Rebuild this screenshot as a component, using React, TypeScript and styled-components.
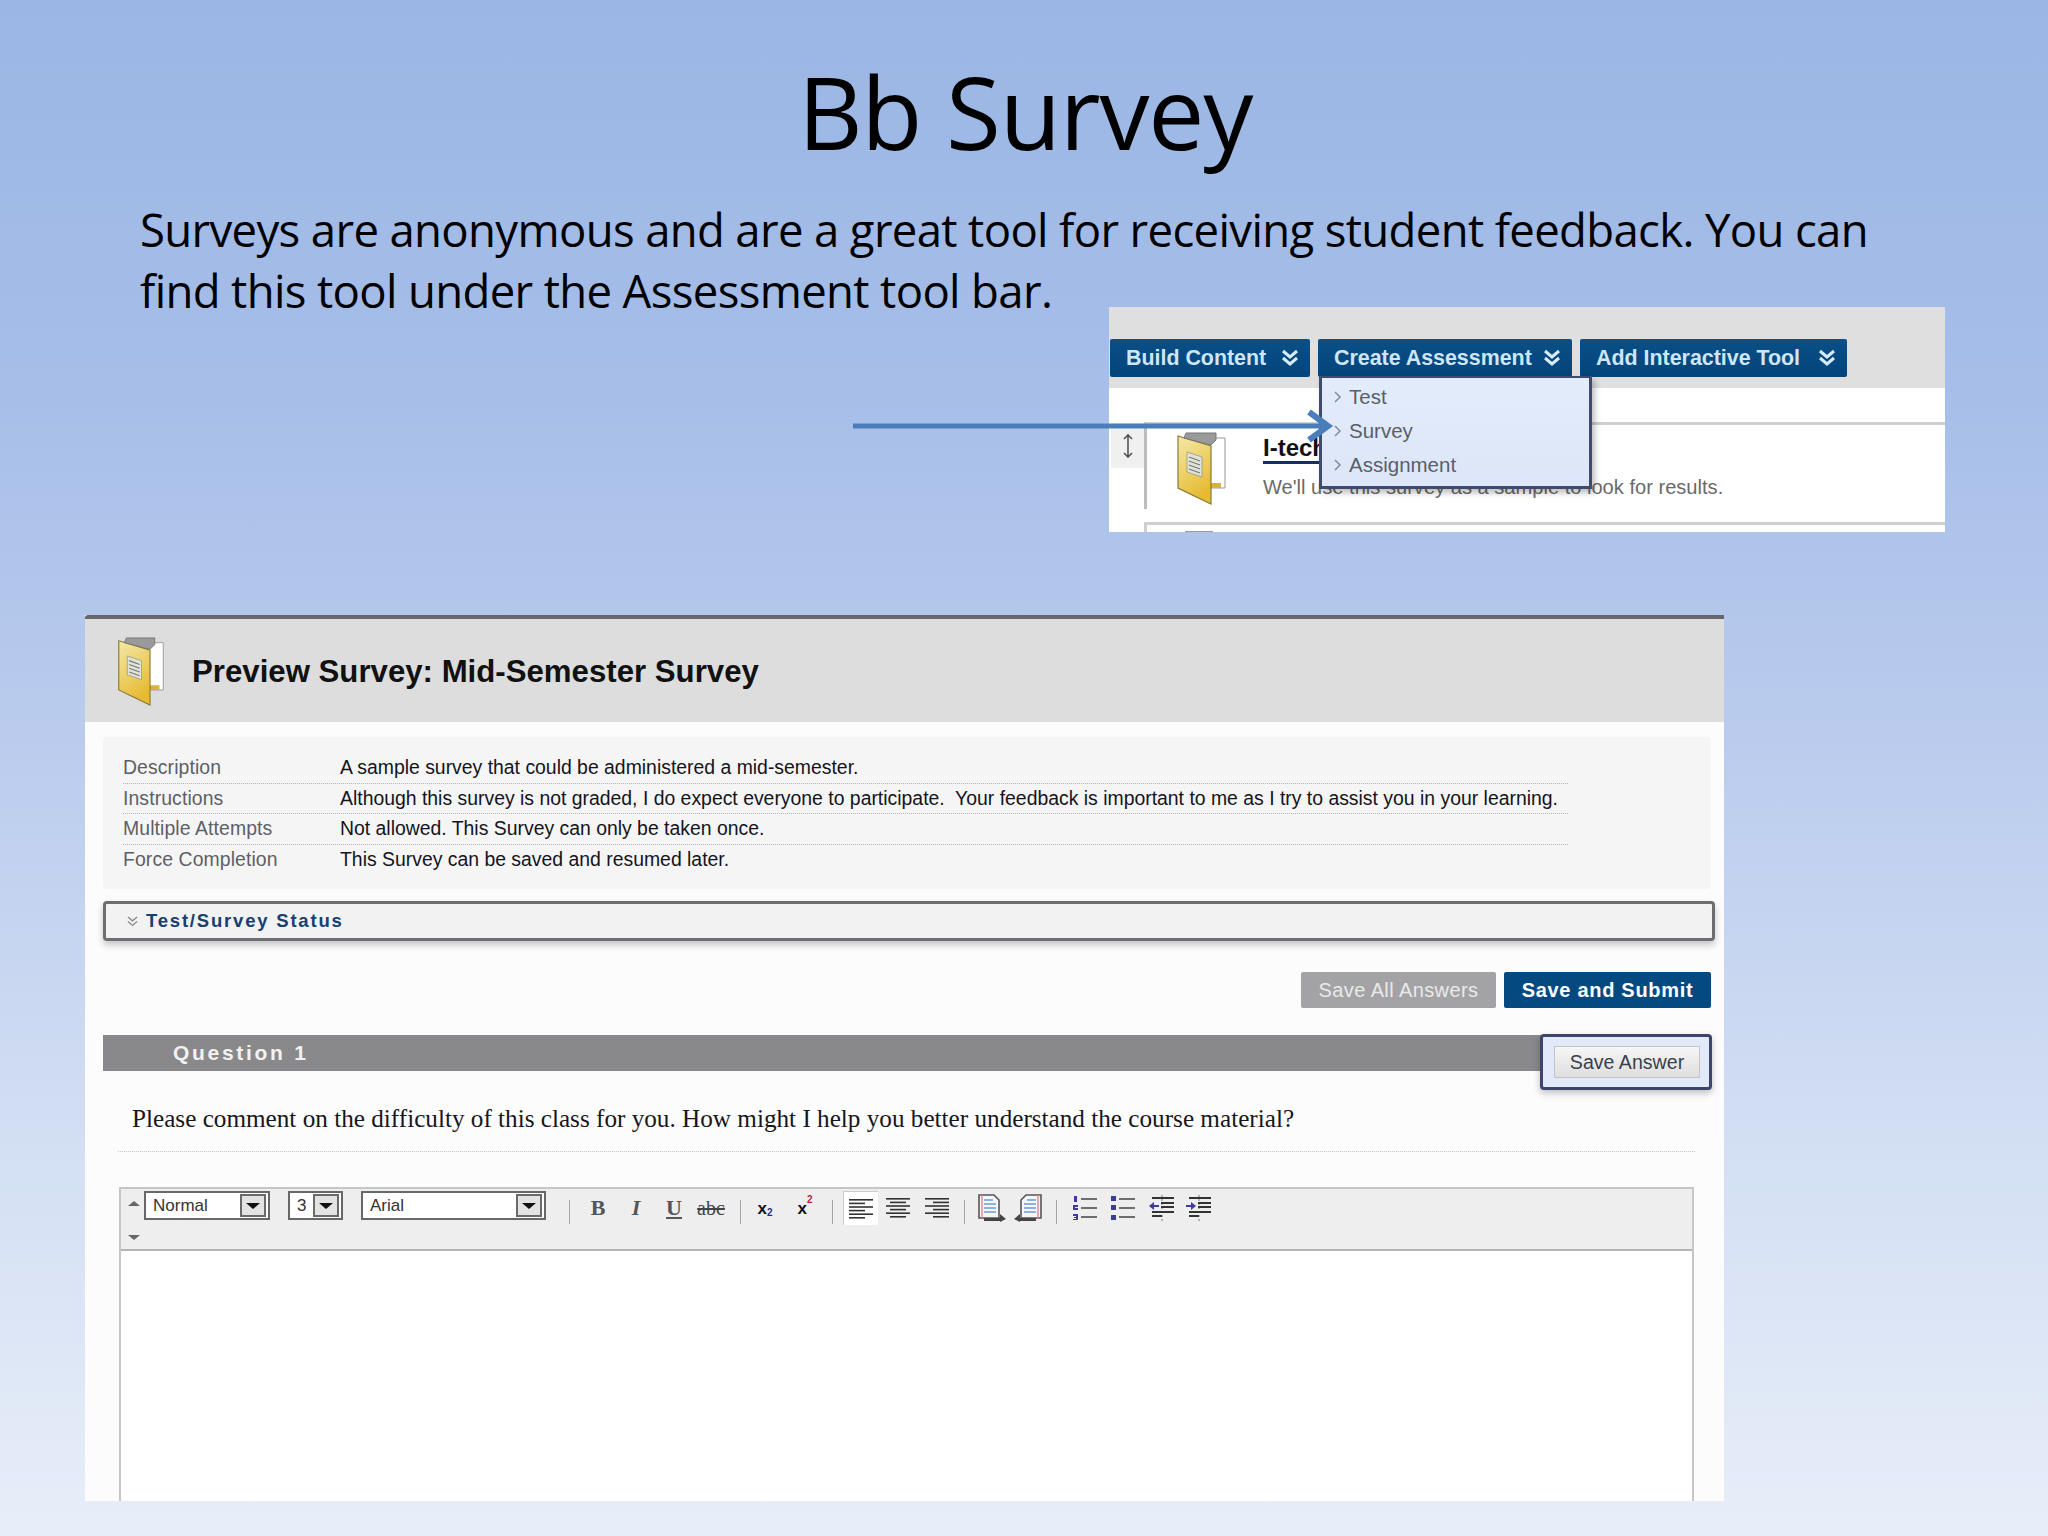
import React from "react";
import styled, { createGlobalStyle } from "styled-components";

const Global = createGlobalStyle`
  html, body { margin: 0; padding: 0; background: #e6ecf8; }
  body { font-family: "Liberation Sans", Arial, sans-serif; }
`;

const Slide = styled.div`
  position: relative;
  width: 2048px;
  height: 1536px;
  overflow: hidden;
  display: flex;
  flex-direction: column;
  background: linear-gradient(180deg, #9bb6e5 0%, #a6bee8 25%, #bccdee 50%, #d3dff3 75%, #e8eef9 100%);
`;

const Title = styled.h1`
  height: 199px;
  box-sizing: border-box;
  margin: 0;
  display: flex;
  align-items: center;
  justify-content: center;
  padding: 22px 0 0 2px;
  font: 400 100px/1 "Open Sans", Lato, sans-serif;
  letter-spacing: -1.2px;
  color: #000;
`;

const Lead = styled.p`
  margin: 0 0 0 140px;
  width: 1770px;
  font: 400 45.5px/61px "Open Sans", Lato, sans-serif;
  letter-spacing: -0.65px;
  font-variant-ligatures: none;
  color: #000;
`;

/* top screenshot */
const MenuShot = styled.div`
  margin: -14px 0 0 1109px;
  width: 836px;
  height: 225px;
  position: relative;
  overflow: hidden;
  background: #fff;
  flex: none;
`;

const MenuBand = styled.div`
  height: 81px;
  background: #dfdfdf;
  display: flex;
  align-items: flex-start;
  gap: 8px;
  padding: 32px 0 0 1px;
  box-sizing: border-box;
`;

const MenuButton = styled.div<{ $w: number }>`
  width: ${(p) => p.$w}px;
  height: 38px;
  box-sizing: border-box;
  padding: 0 10px 0 16px;
  display: flex;
  align-items: center;
  justify-content: space-between;
  background: linear-gradient(180deg, #0a4f88, #03447a);
  border-radius: 2px;
  color: #cfe6f6;
  font-weight: 700;
  font-size: 21.4px;
  white-space: nowrap;
`;

const ContentRow = styled.div`
  display: flex;
  height: 100px;
  margin-top: 34px;
`;

const Handle = styled.div`
  width: 33px;
  height: 45px;
  margin: 1px 0 0 2px;
  background: #f0f0f0;
  display: flex;
  align-items: center;
  justify-content: center;
  flex: none;
`;

const ItemCard = styled.div`
  flex: 1;
  height: 77px;
  border-top: 3px solid #cfcfcf;
  border-left: 3px solid #bdbdbd;
  display: flex;
  gap: 36px;
  padding: 7px 0 0 30px;
`;

const ItemTitle = styled.div`
  font-size: 24px;
  font-weight: 700;
  color: #111;
  border-bottom: 3px solid #12325c;
  width: 100px;
  line-height: 27px;
  margin-top: 2px;
  white-space: nowrap;
`;

const ItemText = styled.div`
  margin-top: 12px;
  font-size: 20.1px;
  color: #6a6a6a;
  white-space: nowrap;
`;

const NextCard = styled.div`
  margin: 0 0 0 35px;
  height: 12px;
  box-sizing: border-box;
  padding: 6px 0 0 38px;
  border-top: 3px solid #cfcfcf;
  border-left: 3px solid #cfcfcf;
`;

const NextIconTip = styled.div`
  width: 28px;
  height: 3px;
  background: #9a9a9a;
`;

const Dropdown = styled.div`
  position: absolute;
  left: 210px;
  top: 69px;
  width: 273px;
  height: 113px;
  box-sizing: border-box;
  padding: 2px 0 0 12px;
  background: linear-gradient(180deg, #e2ecfb, #dce6f8);
  border: 3px solid #3f4b6e;
  border-top-width: 2px;
  box-shadow: 3px 4px 6px rgba(0, 0, 0, 0.25);
  display: flex;
  flex-direction: column;
`;

const DropItem = styled.div`
  height: 34px;
  display: flex;
  align-items: center;
  gap: 7px;
  font-size: 20.5px;
  color: #5a5f68;
`;

/* lower screenshot */
const SurveyShot = styled.div`
  position: relative;
  margin: 83px 0 0 85px;
  width: 1639px;
  height: 886px;
  flex: none;
  overflow: hidden;
  background: #fcfcfd;
`;

const Header = styled.div`
  height: 107px;
  box-sizing: border-box;
  border-top: 4px solid #66676c;
  border-top-left-radius: 3px;
  background: #dcdddc;
  display: flex;
  align-items: center;
  padding: 2px 0 0 32px;
  gap: 26px;
`;

const HeaderTitle = styled.h2`
  margin: 0;
  font-size: 31.2px;
  font-weight: 700;
  color: #111;
  white-space: nowrap;
`;

const InfoBox = styled.div`
  margin: 15px 13px 0 18px;
  height: 152px;
  box-sizing: border-box;
  padding: 16px 0 0 20px;
  border-radius: 4px;
  background: #f5f5f6;
`;

const InfoRow = styled.div<{ $last?: boolean }>`
  width: 1445px;
  height: 30.5px;
  display: flex;
  align-items: center;
  box-sizing: border-box;
  font-size: 19.4px;
  border-bottom: ${(p) => (p.$last ? "none" : "1px dotted #b4b4b4")};
`;

const InfoLabel = styled.div`
  width: 217px;
  color: #5d5f66;
  letter-spacing: 0.1px;
  flex: none;
`;

const InfoValue = styled.div`
  color: #14141c;
  white-space: pre;
`;

const StatusBar = styled.div`
  margin: 12px 9px 0 18px;
  height: 40px;
  box-sizing: border-box;
  border: 3px solid #6e6e72;
  border-radius: 4px;
  background: #f2f2f3;
  box-shadow: 0 4px 7px rgba(0, 0, 0, 0.22);
  display: flex;
  align-items: center;
  gap: 7px;
  padding-left: 20px;
  font-size: 18.5px;
  font-weight: 700;
  letter-spacing: 1.8px;
  color: #16406f;
`;

const ActionRow = styled.div`
  margin: 31px 13px 0 0;
  display: flex;
  justify-content: flex-end;
  gap: 8px;
`;

const ActionButton = styled.div<{ $primary?: boolean }>`
  height: 36px;
  width: ${(p) => (p.$primary ? 207 : 195)}px;
  display: flex;
  align-items: center;
  justify-content: center;
  border-radius: 2px;
  font-size: 20px;
  white-space: nowrap;
  background: ${(p) => (p.$primary ? "#04497f" : "#a3a3a5")};
  color: ${(p) => (p.$primary ? "#fff" : "#e9e9ea")};
  font-weight: ${(p) => (p.$primary ? 700 : 400)};
  letter-spacing: ${(p) => (p.$primary ? "0.7px" : "0.4px")};
`;

const QuestionBar = styled.div`
  margin: 27px 13px 0 18px;
  height: 36px;
  box-sizing: border-box;
  padding-left: 70px;
  background: #89898c;
  display: flex;
  align-items: center;
  font-size: 21px;
  font-weight: 700;
  letter-spacing: 2.7px;
  color: #f2f2f2;
`;

const SaveBox = styled.div`
  position: absolute;
  left: 1455px;
  top: 419px;
  width: 172px;
  height: 56px;
  box-sizing: border-box;
  border: 3px solid #3d456c;
  border-radius: 4px;
  background: #e2eafa;
  box-shadow: 0 3px 7px rgba(0, 0, 0, 0.25);
  display: flex;
  align-items: center;
  justify-content: flex-end;
  padding-right: 9px;
`;

const SaveButton = styled.div`
  width: 146px;
  height: 32px;
  box-sizing: border-box;
  border: 1px solid #c4c4c4;
  background: linear-gradient(180deg, #f6f6f6, #dedede);
  display: flex;
  align-items: center;
  justify-content: center;
  font-size: 19.6px;
  color: #3b3f4c;
`;

const QuestionText = styled.div`
  margin: 33px 22px 0 47px;
  height: 47px;
  font: 400 25.2px/29px "Liberation Serif", serif;
  color: #16161c;
  white-space: nowrap;
`;

const Rule = styled.div`
  margin: 0 29px 0 33px;
  border-top: 1px dotted #c4c4c4;
`;

const Editor = styled.div`
  margin: 35px 0 0 34px;
  width: 1575px;
  height: 400px;
  box-sizing: border-box;
  border: 2px solid #c6c6c6;
  background: #fff;
`;

const Toolbar = styled.div`
  height: 62px;
  box-sizing: border-box;
  border-bottom: 2px solid #b4b4b4;
  background: #eeeeef;
  display: flex;
  align-items: flex-start;
  padding: 2px 0 0 7px;
`;

const Spinner = styled.div`
  width: 16px;
  height: 49px;
  display: flex;
  flex-direction: column;
  justify-content: space-between;
  padding: 10px 0 0;
  box-sizing: border-box;
  flex: none;
`;

const Tri = styled.div<{ $up?: boolean; $size?: number }>`
  width: 0;
  height: 0;
  border-left: ${(p) => p.$size ?? 6}px solid transparent;
  border-right: ${(p) => p.$size ?? 6}px solid transparent;
  ${(p) =>
    p.$up
      ? `border-bottom: ${(p.$size ?? 6) - 1}px solid #666;`
      : `border-top: ${(p.$size ?? 6) - 1}px solid ${p.$size ? "#111" : "#666"};`}
`;

const Select = styled.div<{ $w: number; $gap?: number }>`
  width: ${(p) => p.$w}px;
  height: 29px;
  margin-left: ${(p) => p.$gap ?? 0}px;
  box-sizing: border-box;
  border: 2px solid #686868;
  background: #fff;
  display: flex;
  align-items: center;
  justify-content: space-between;
  padding: 0 2px 0 7px;
  font-size: 17px;
  color: #333;
  flex: none;
`;

const SelectArrow = styled.div`
  width: 26px;
  height: 23px;
  box-sizing: border-box;
  border: 2px solid #6a6a6a;
  background: #e3e3e3;
  display: flex;
  align-items: center;
  justify-content: center;
`;

const Sep = styled.div<{ $l: number; $r: number }>`
  width: 1px;
  height: 24px;
  margin: 9px ${(p) => p.$r}px 0 ${(p) => p.$l}px;
  background: #a5a5a5;
  flex: none;
`;

const Tool = styled.div<{ $w: number; $active?: boolean }>`
  width: ${(p) => p.$w}px;
  height: 34px;
  flex: none;
  display: flex;
  align-items: center;
  justify-content: center;
  box-sizing: border-box;
  background: ${(p) => (p.$active ? "#fff" : "transparent")};
  border-top: ${(p) => (p.$active ? "1px solid #ccc" : "none")};
  border-left: ${(p) => (p.$active ? "1px solid #ccc" : "none")};
`;

const ToolGlyph = styled.span<{ $italic?: boolean; $under?: boolean; $strike?: boolean; $small?: boolean }>`
  font-family: "Liberation Serif", serif;
  font-weight: ${(p) => (p.$small ? 400 : 700)};
  font-size: ${(p) => (p.$small ? 20 : 22)}px;
  color: ${(p) => (p.$small ? "#444" : "#555")};
  font-style: ${(p) => (p.$italic ? "italic" : "normal")};
  text-decoration: ${(p) => (p.$under ? "underline" : p.$strike ? "line-through" : "none")};
`;

const ScriptX = styled.span`
  font: 700 17px/1 "Liberation Sans", sans-serif;
  color: #111;
  display: flex;
`;

const Script = styled.span<{ $sup?: boolean }>`
  font-size: 10px;
  color: ${(p) => (p.$sup ? "#b3263a" : "#2b2b8a")};
  transform: translateY(${(p) => (p.$sup ? -5 : 8)}px);
`;

const ArrowLayer = styled.svg`
  position: absolute;
  left: 850px;
  top: 408px;
`;

const DoubleChevron = ({ size = 20, color = "#d7ecf8", weight = 3 }: { size?: number; color?: string; weight?: number }) => (
  <svg width={size} height={size} viewBox="0 0 20 20" fill="none" stroke={color} strokeWidth={weight}>
    <path d="M3 3l7 6 7-6M3 10l7 6 7-6" />
  </svg>
);

const Clipboard = ({ w, h }: { w: number; h: number }) => (
  <svg width={w} height={h} viewBox="0 0 50 74" style={{ flex: "none" }}>
    <defs>
      <linearGradient id="clipFill" x1="0" y1="0" x2="0.4" y2="1">
        <stop offset="0" stopColor="#f5e9a8" />
        <stop offset="1" stopColor="#e6bb32" />
      </linearGradient>
    </defs>
    <path d="M24 6h24v50H24z" fill="#fff" stroke="#999" strokeWidth="1" />
    <path d="M34 56h10v-5H34z" fill="#d9b23c" />
    <path d="M1 4l33 10v58L1 56z" fill="url(#clipFill)" stroke="#8a7a35" strokeWidth="1.2" />
    <path d="M9 1h30v7l-5 5L7 6z" fill="#9a9a9a" stroke="#777" strokeWidth="1" />
    <path d="M10 20l15 5v20l-15-5z" fill="#dfe3d8" stroke="#9a9a80" strokeWidth="0.8" />
    <path d="M12 25l11 4M12 29l11 4M12 33l11 4M12 37l11 4" stroke="#777" strokeWidth="1.2" />
  </svg>
);

const Lines = ({ align }: { align: "left" | "center" | "right" }) => {
  const rows = [24, 16, 24, 16, 24, 16];
  return (
    <svg width="24" height="24" viewBox="0 0 24 24">
      {rows.map((len, i) => {
        const x = align === "left" ? 0 : align === "right" ? 24 - len : (24 - len) / 2;
        return <rect key={i} x={x} y={2 + i * 3.6} width={len} height="1.6" fill="#333" />;
      })}
    </svg>
  );
};

const DocIcon = ({ flip }: { flip?: boolean }) => (
  <svg width="28" height="28" viewBox="0 0 28 28" style={flip ? { transform: "scaleX(-1)" } : undefined}>
    <path d="M1 1h15l5 5v18H1z" fill="#f4f6fa" stroke="#555" strokeWidth="1.6" />
    <path d="M4 1v23" stroke="#d88" strokeWidth="1.4" />
    <path d="M6 6h9M6 10h12M6 14h12M6 18h12" stroke="#8fb2dc" strokeWidth="2" />
    <path d="M6 24h16v-4l6 5-6 3v-1H6z" fill="#444" />
  </svg>
);

const OrderedIcon = () => (
  <svg width="26" height="26" viewBox="0 0 26 26">
    <path d="M9 4h16M9 13h16M9 22h16" stroke="#444" strokeWidth="1.6" />
    <path d="M2 1h3v6H2zM1 10h5v2H3v1h3v2H1zM1 19h5v6H1v-1h3v-1H2v-1h2v-1H1z" fill="#3c3c9a" />
  </svg>
);

const BulletIcon = () => (
  <svg width="26" height="26" viewBox="0 0 26 26">
    <path d="M9 4h16M9 13h16M9 22h16" stroke="#444" strokeWidth="1.6" />
    <path d="M1 1h5v5H1zM1 10h5v5H1zM1 20h5v5H1z" fill="#3c3c9a" />
  </svg>
);

const IndentIcon = ({ out }: { out?: boolean }) => (
  <svg width="26" height="26" viewBox="0 0 26 26">
    <path d="M13 0v26" stroke="#777" strokeWidth="1" strokeDasharray="2 2" />
    <path d="M3 3h22M12 8h13M12 12h13M3 17h22M3 21h10" stroke="#333" strokeWidth="1.8" />
    {out ? (
      <path d="M0 11l5-4v3h5v2H5v3z" fill="#3c3c9a" />
    ) : (
      <path d="M10 11L5 7v3H0v2h5v3z" fill="#3c3c9a" />
    )}
  </svg>
);

const App: React.FC = () => {
  return (
    <Slide>
      <Global />
      <Title>Bb Survey</Title>
      <Lead>
        Surveys are anonymous and are a great tool for receiving student feedback. You can find this tool under the
        Assessment tool bar.
      </Lead>

      <MenuShot>
        <MenuBand>
          <MenuButton $w={200}>
            Build Content <DoubleChevron />
          </MenuButton>
          <MenuButton $w={254}>
            Create Assessment <DoubleChevron />
          </MenuButton>
          <MenuButton $w={267}>
            Add Interactive Tool <DoubleChevron />
          </MenuButton>
        </MenuBand>
        <ContentRow>
          <Handle>
            <svg width="12" height="26" viewBox="0 0 12 26" fill="none" stroke="#555" strokeWidth="1.6">
              <path d="M6 2v22M2 6l4-4 4 4M2 20l4 4 4-4" />
            </svg>
          </Handle>
          <ItemCard>
            <Clipboard w={50} h={74} />
            <div>
              <ItemTitle>I-tech</ItemTitle>
              <ItemText>We'll use this survey as a sample to look for results.</ItemText>
            </div>
          </ItemCard>
        </ContentRow>
        <NextCard>
          <NextIconTip />
        </NextCard>
        <Dropdown>
          {["Test", "Survey", "Assignment"].map((label) => (
            <DropItem key={label}>
              <svg width="8" height="12" viewBox="0 0 8 12" fill="none" stroke="#8b8f98" strokeWidth="1.6">
                <path d="M1 1l5 5-5 5" />
              </svg>
              {label}
            </DropItem>
          ))}
        </Dropdown>
      </MenuShot>

      <SurveyShot>
        <Header>
          <Clipboard w={49} h={70} />
          <HeaderTitle>Preview Survey: Mid-Semester Survey</HeaderTitle>
        </Header>
        <InfoBox>
          <InfoRow>
            <InfoLabel>Description</InfoLabel>
            <InfoValue>A sample survey that could be administered a mid-semester.</InfoValue>
          </InfoRow>
          <InfoRow>
            <InfoLabel>Instructions</InfoLabel>
            <InfoValue>
              {"Although this survey is not graded, I do expect everyone to participate.  Your feedback is important to me as I try to assist you in your learning."}
            </InfoValue>
          </InfoRow>
          <InfoRow>
            <InfoLabel>Multiple Attempts</InfoLabel>
            <InfoValue>Not allowed. This Survey can only be taken once.</InfoValue>
          </InfoRow>
          <InfoRow $last>
            <InfoLabel>Force Completion</InfoLabel>
            <InfoValue>This Survey can be saved and resumed later.</InfoValue>
          </InfoRow>
        </InfoBox>
        <StatusBar>
          <DoubleChevron size={13} color="#8a8a8a" weight={2} />
          Test/Survey Status
        </StatusBar>
        <ActionRow>
          <ActionButton>Save All Answers</ActionButton>
          <ActionButton $primary>Save and Submit</ActionButton>
        </ActionRow>
        <QuestionBar>Question 1</QuestionBar>
        <SaveBox>
          <SaveButton>Save Answer</SaveButton>
        </SaveBox>
        <QuestionText>
          Please comment on the difficulty of this class for you. How might I help you better understand the course
          material?
        </QuestionText>
        <Rule />
        <Editor>
          <Toolbar>
            <Spinner>
              <Tri $up />
              <Tri />
            </Spinner>
            <Select $w={126} $gap={0}>
              Normal
              <SelectArrow>
                <Tri $size={7} />
              </SelectArrow>
            </Select>
            <Select $w={55} $gap={18}>
              3
              <SelectArrow>
                <Tri $size={7} />
              </SelectArrow>
            </Select>
            <Select $w={185} $gap={18}>
              Arial
              <SelectArrow>
                <Tri $size={7} />
              </SelectArrow>
            </Select>
            <Sep $l={23} $r={9} />
            <Tool $w={38}>
              <ToolGlyph>B</ToolGlyph>
            </Tool>
            <Tool $w={38}>
              <ToolGlyph $italic>I</ToolGlyph>
            </Tool>
            <Tool $w={38}>
              <ToolGlyph $under>U</ToolGlyph>
            </Tool>
            <Tool $w={36}>
              <ToolGlyph $small $strike>
                abc
              </ToolGlyph>
            </Tool>
            <Sep $l={11} $r={4} />
            <Tool $w={40}>
              <ScriptX>
                x<Script>2</Script>
              </ScriptX>
            </Tool>
            <Tool $w={40}>
              <ScriptX>
                x<Script $sup>2</Script>
              </ScriptX>
            </Tool>
            <Sep $l={7} $r={10} />
            <Tool $w={35} $active>
              <Lines align="left" />
            </Tool>
            <Tool $w={40}>
              <Lines align="center" />
            </Tool>
            <Tool $w={38}>
              <Lines align="right" />
            </Tool>
            <Sep $l={8} $r={8} />
            <Tool $w={38}>
              <DocIcon />
            </Tool>
            <Tool $w={34}>
              <DocIcon flip />
            </Tool>
            <Sep $l={11} $r={9} />
            <Tool $w={38}>
              <OrderedIcon />
            </Tool>
            <Tool $w={37}>
              <BulletIcon />
            </Tool>
            <Tool $w={41}>
              <IndentIcon out />
            </Tool>
            <Tool $w={34}>
              <IndentIcon />
            </Tool>
          </Toolbar>
        </Editor>
      </SurveyShot>

      <ArrowLayer width="490" height="36" viewBox="0 0 490 36" fill="none" stroke="#4a7ebb" strokeWidth="5">
        <path d="M3 18H476" />
        <path d="M459 4l19 14-19 14" strokeWidth="6" />
      </ArrowLayer>
    </Slide>
  );
};

export default App;
